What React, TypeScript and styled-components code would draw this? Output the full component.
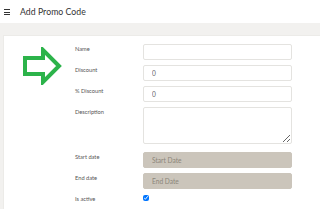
import React from 'react'
import styled, { createGlobalStyle } from 'styled-components'

const GlobalStyle = createGlobalStyle`
	html, body {
		margin: 0;
		padding: 0;
		background: #f2f1ef;
		font-family: 'Lato', 'Liberation Sans', sans-serif;
	}
`

const Page = styled.div`
	width: 320px;
	height: 209px;
	overflow: hidden;
	display: flex;
	flex-direction: column;
`

const TopBar = styled.header`
	height: 23px;
	background: #ffffff;
	display: flex;
	align-items: center;
	gap: 10px;
	padding-left: 4px;
	box-sizing: border-box;
`

const Burger = styled.div`
	width: 6px;
	display: flex;
	flex-direction: column;
	gap: 1.5px;
	margin-top: 1px;

	span {
		display: block;
		height: 1px;
		background: #333;
	}
`

const Title = styled.h1`
	margin: 0;
	font-size: 8.7px;
	font-weight: 400;
	color: #333;
	letter-spacing: 0.05px;
`

const Main = styled.main`
	flex: 1;
	padding: 12px 0 0 3px;
	display: flex;
`

const Card = styled.section`
	flex: 1;
	background: #ffffff;
	border-left: 1px solid #ecebe8;
	border-top: 1px solid #ecebe8;
	display: flex;
	padding-top: 8px;
`

const Aside = styled.div`
	width: 71px;
	padding: 3px 0 0 18px;
	box-sizing: border-box;
`

const Form = styled.form`
	display: grid;
	grid-template-columns: 68px 149px;
	grid-auto-rows: min-content;
	row-gap: 5px;
	align-items: start;
`

const Label = styled.label`
	font-size: 5.7px;
	line-height: 8px;
	height: 9px;
	color: #555;
	padding-top: 1px;
	box-sizing: border-box;
`

const Field = styled.input<{ $muted?: boolean }>`
	display: block;
	box-sizing: border-box;
	width: 149px;
	height: 16px;
	margin: 0;
	padding: 0 8px;
	border: 1px solid ${p => (p.$muted ? '#cbc5bb' : '#e4e3e0')};
	border-radius: 2px;
	background: ${p => (p.$muted ? '#cbc5bb' : '#ffffff')};
	font-family: inherit;
	font-size: 6.6px;
	color: #666;
	outline: none;

	&::placeholder {
		color: #8c857a;
	}
`

const Area = styled.textarea`
	box-sizing: border-box;
	width: 149px;
	height: 37px;
	margin: 0 0 3px;
	padding: 4px 8px;
	border: 1px solid #e4e3e0;
	border-radius: 2px;
	display: block;
	font-family: inherit;
	font-size: 6.6px;
	outline: none;
`

const Check = styled.input`
	display: block;
	width: 6px;
	height: 6px;
	margin: 1px 0 0;
	accent-color: #0075ff;
`

const Arrow = () => (
	<svg width="40" height="38" viewBox="0 0 40 38">
		<path
			d="M3 11 H21 V3 L37 19 L21 35 V27 H3 Z"
			fill="none"
			stroke="#2cb34a"
			strokeWidth="4"
			strokeLinejoin="miter"
		/>
	</svg>
)

const App = () => {
	return (
		<>
			<GlobalStyle />
			<Page>
				<TopBar>
					<Burger>
						<span />
						<span />
						<span />
					</Burger>
					<Title>Add Promo Code</Title>
				</TopBar>
				<Main>
					<Card>
						<Aside>
							<Arrow />
						</Aside>
						<Form>
							<Label>Name</Label>
							<Field />
							<Label>Discount</Label>
							<Field defaultValue="0" />
							<Label>% Discount</Label>
							<Field defaultValue="0" />
							<Label>Description</Label>
							<Area />
							<Label>Start date</Label>
							<Field $muted placeholder="Start Date" />
							<Label>End date</Label>
							<Field $muted placeholder="End Date" />
							<Label>Is active</Label>
							<Check type="checkbox" defaultChecked />
						</Form>
					</Card>
				</Main>
			</Page>
		</>
	)
}

export default App
